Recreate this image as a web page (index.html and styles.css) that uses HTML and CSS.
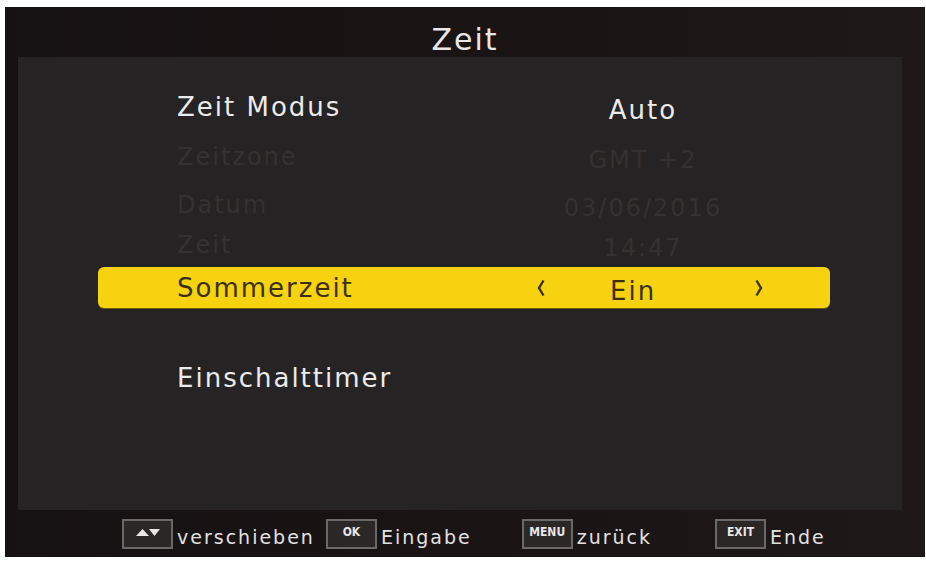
FILE: index.html
```html
<!DOCTYPE html>
<html lang="de">
<head>
<meta charset="utf-8">
<title>Zeit</title>
<link rel="stylesheet" href="styles.css">
</head>
<body>
<div class="screen">
  <header class="title">Zeit</header>
  <main class="panel">
    <div class="menu">
      <div class="row r1"><span class="label">Zeit Modus</span><span class="value">Auto</span></div>
      <div class="row r2 dim"><span class="label">Zeitzone</span><span class="value">GMT +2</span></div>
      <div class="row r3 dim"><span class="label">Datum</span><span class="value">03/06/2016</span></div>
      <div class="row r4 dim"><span class="label">Zeit</span><span class="value">14:47</span></div>
      <div class="row r5 selected"><span class="label">Sommerzeit</span><span class="value choice"><svg class="arrow" width="8" height="18" viewBox="0 0 8 18"><polyline points="6.5,1.5 2,9 6.5,16.5" fill="none" stroke="#3b300c" stroke-width="2.4"/></svg><span class="ein">Ein</span><svg class="arrow right" width="8" height="18" viewBox="0 0 8 18"><polyline points="1.5,1.5 6,9 1.5,16.5" fill="none" stroke="#3b300c" stroke-width="2.4"/></svg></span></div>
      <div class="row r6"><span class="label">Einschalttimer</span></div>
    </div>
  </main>
  <footer class="footer">
    <div class="hint"><span class="key"><svg width="30" height="10" viewBox="0 0 30 10"><polygon points="3,9 9.5,2 16,9" fill="#e8e6e6"/><polygon points="16,2 27,2 21.5,9" fill="#e8e6e6"/></svg></span><span class="htext">verschieben</span></div>
    <div class="hint"><span class="key"><span class="klabel">OK</span></span><span class="htext">Eingabe</span></div>
    <div class="hint"><span class="key"><span class="klabel">MENU</span></span><span class="htext">zurück</span></div>
    <div class="hint"><span class="key"><span class="klabel">EXIT</span></span><span class="htext">Ende</span></div>
  </footer>
</div>
</body>
</html>
```
FILE: styles.css
```css
html, body {
  margin: 0;
  padding: 0;
  background: #ffffff;
}
body {
  font-family: "DejaVu Sans", "Liberation Sans", sans-serif;
  width: 926px;
  height: 562px;
  overflow: hidden;
}
.screen {
  margin: 7px 0 0 5px;
  width: 920px;
  height: 550px;
  box-sizing: border-box;
  background: linear-gradient(90deg, #161112 0%, #1a1415 60%, #1e1819 100%);
  display: flex;
  flex-direction: column;
  padding: 0 23px 0 13px;
}
.title {
  height: 50px;
  box-sizing: border-box;
  padding-top: 15px;
  text-align: center;
  color: #e9e7e7;
  font-size: 30px;
  line-height: 36px;
  letter-spacing: 2px;
  padding-left: 10px;
}
.panel {
  height: 453px;
  background: #252323;
  box-sizing: border-box;
  padding: 30px 0 0 80px;
}
.menu {
  width: 732px;
  display: grid;
  grid-template-columns: 732px;
  grid-template-rows: 40px 60px 36px 44px 41px 140px;
}
.row {
  display: grid;
  grid-template-columns: 335px 260px;
  align-items: center;
  color: #ecebeb;
  font-size: 26px;
  letter-spacing: 2px;
  padding-left: 80px;
  box-sizing: border-box;
}
.label {
  white-space: nowrap;
  margin-left: -1px;
}
.value {
  text-align: center;
  padding-top: 6px;
  white-space: nowrap;
}
.dim {
  color: #343131;
  font-size: 24px;
}
.dim .value { padding-top: 5px; }
.selected {
  background: #f7d20e;
  border-radius: 6px;
  color: #3b300c;
  box-shadow: 0 1px 0 #6d5a07;
}
.choice {
  display: flex;
  align-items: center;
  padding: 6px 10px 0 24px;
}
.ein {
  margin-left: 65px;
}
.arrow {
  margin-top: -6px;
}
.arrow.right {
  margin-left: auto;
}
.footer {
  flex: 1;
  display: flex;
  align-items: center;
  padding-left: 104px;
  padding-top: 1px;
  color: #e3e1e1;
}
.hint {
  display: flex;
  align-items: center;
}
.hint:nth-child(2) { margin-left: 11px; }
.hint:nth-child(3) { margin-left: 50px; }
.hint:nth-child(4) { margin-left: 63px; }
.key {
  width: 51px;
  height: 30px;
  box-sizing: border-box;
  border: 2px solid #6b6868;
  background: #2b2727;
  display: flex;
  align-items: center;
  justify-content: center;
  padding-bottom: 4px;
}
.klabel {
  font-size: 12px;
  color: #e8e6e6;
  font-family: "DejaVu Sans Condensed", "DejaVu Sans", sans-serif;
  font-weight: bold;
  letter-spacing: 0;
}
.htext {
  font-size: 19px;
  letter-spacing: 2px;
  margin-left: 4px;
  padding-top: 6px;
}
```
